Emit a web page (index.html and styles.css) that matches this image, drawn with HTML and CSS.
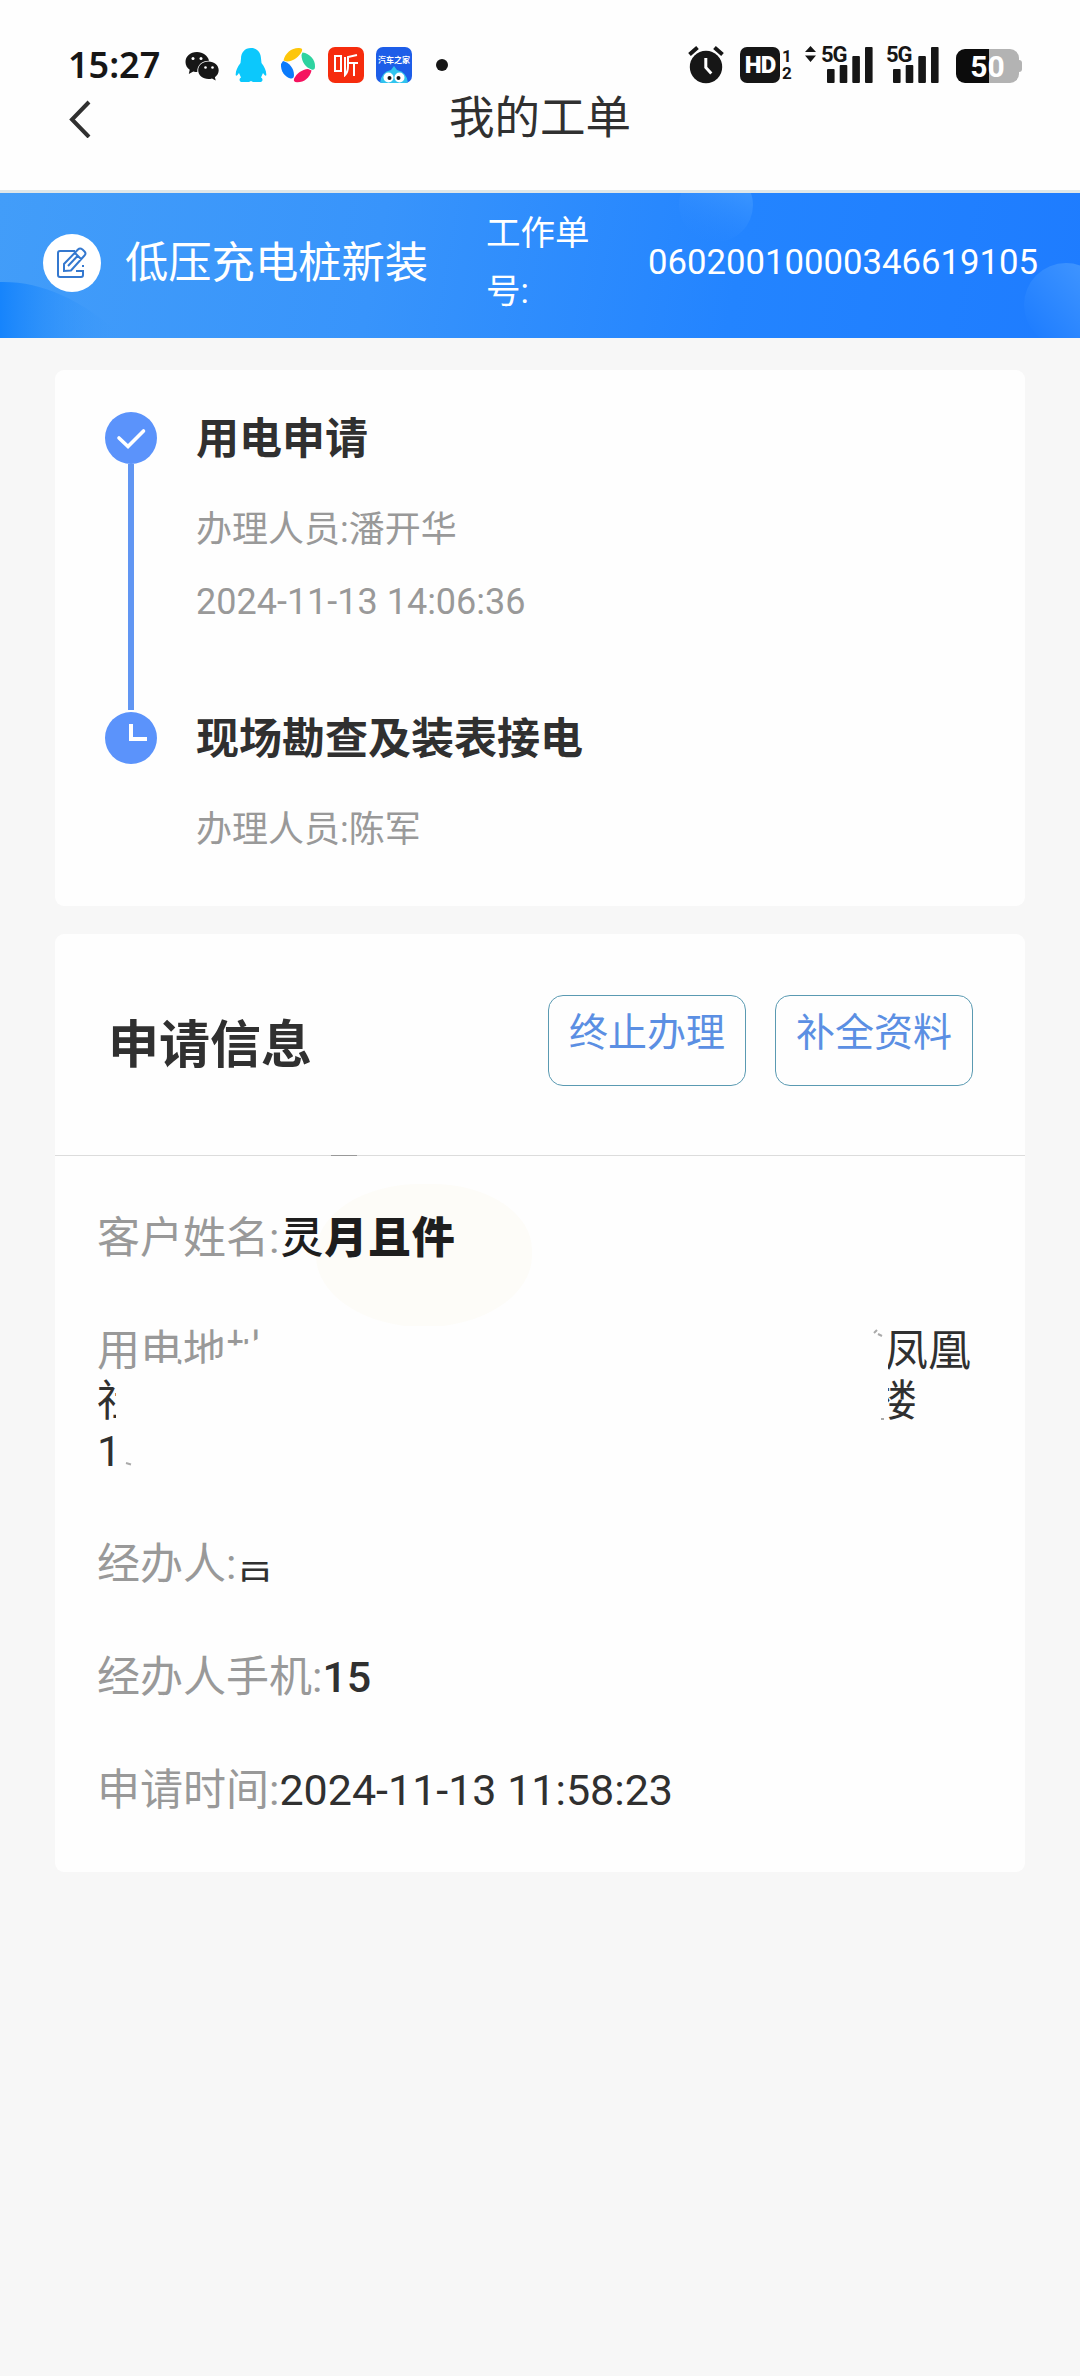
FILE: index.html
```html
<!DOCTYPE html>
<html lang="zh-CN">
<head>
<meta charset="utf-8">
<title>我的工单</title>
<link rel="stylesheet" href="styles.css">
</head>
<body>
<div class="status">
  <span class="clock">15:27</span>
  <svg class="ic-wechat" width="36" height="36" viewBox="0 0 36 36"><path fill="#161616" d="M13 5C6 5 1.500 9.500 1.500 15c0 3.300 1.600 5.900 4.200 7.700L4.800 27l4.500-2.500c1.300.4 2.500.5 4 .5C13 18 18 13.600 25 13.700 23.800 8.600 19 5 13 5z"/><path fill="#161616" d="M24.500 14.500c-5.900 0-10.300 3.900-10.300 8.800s4.400 8.700 10.300 8.700c1.200 0 2.400-.1 3.500-.5l3.700 2-.8-3.300c2.300-1.600 3.800-4 3.800-6.900 0-4.900-4.500-8.800-10.200-8.800z"/><g fill="#fff"><circle cx="9" cy="11.500" r="1.500"/><circle cx="17" cy="11.500" r="1.500"/><circle cx="21.500" cy="20.500" r="1.300"/><circle cx="28.500" cy="20.500" r="1.300"/></g></svg>
  <svg class="ic-qq" width="32" height="36" viewBox="0 0 32 36"><path fill="#0cc8fc" d="M16 1C9.500 1 6 6 6 11.500L5.500 16C2.500 20 .500 24 .700 28c.3 1.600 1.800.3 3.300-2l2 4.500c-2 .8-2 4.300.5 4.500h7.500l2-1 2 1H26c2-.5 2-3.700 0-4.500l2-4.500c1.500 2.300 3 3.600 3.300 2 .2-4-1.800-8-4.800-12L26 11.500C26 6 22.500 1 16 1z"/></svg>
  <svg class="ic-pinwheel" width="36" height="36" viewBox="0 0 36 36"><path fill="#fdc60a" d="M3.500 13.500C5 6 12 .6 19 1q4 0 3 3c-3 6-8 10-15 10.500z"/><path fill="#2ed3a0" d="M22.500 5.500C30 6.500 35.500 13 35 19.500q0 4-3.500 3C26 20.500 21.500 15 21.500 8z"/><path fill="#f5135f" d="M31.500 23.500C30 30.500 24 35.500 17 35.300q-4-.3-3-3.500C16.500 26.500 22 22.500 28 22z"/><path fill="#0b7bfb" d="M3 14C9 15.500 14 21 14 28q0 4-3.500 3.500C4.500 30 .5 24 1 17z"/></svg>
  <span class="app app-ting"><svg width="26" height="24" viewBox="0 0 26 24" fill="none" stroke="#fff" stroke-width="2"><path d="M2 3h6v15H2zM24 2l-9 2v9q0 6-3 9V4M15 10h10M21 10v13"/></svg></span>
  <span class="app app-car"><b>汽车之家</b><svg width="36" height="17" viewBox="0 0 36 17"><path fill="#30c4ee" d="M4 17Q5 6 15 4L18 0l3 4q10 2 11 13z"/><circle cx="12.500" cy="11.500" r="5" fill="#fff"/><circle cx="23.500" cy="11.500" r="5" fill="#fff"/><circle cx="13.500" cy="12" r="2" fill="#161616"/><circle cx="22.500" cy="12" r="2" fill="#161616"/></svg></span>
  <span class="more"></span>
  <span class="grow"></span>
  <svg class="ic-alarm" width="36" height="38" viewBox="0 0 36 38"><circle cx="18" cy="21" r="16.200" fill="#161616"/><path d="M1.500 8.500l8-7M34.500 8.500l-8-7" stroke="#161616" stroke-width="4"/><path d="M17.800 12v9.500l5.500 6" stroke="#fff" stroke-width="3" fill="none"/></svg>
  <span class="hd">HD</span>
  <span class="sim"><i>1</i><i>2</i></span>
  <span class="signal signal-a">
    <svg width="68" height="38" viewBox="0 0 68 38" fill="#161616"><path d="M5.500 0l5.500 6H0zM0 9.500h11l-5.500 6.500z"/><rect x="22" y="23" width="7.600" height="14" rx="1"/><rect x="34.700" y="19" width="7.600" height="18" rx="1"/><rect x="47.300" y="10" width="7.600" height="27" rx="1"/><rect x="60" y="1" width="7.600" height="36" rx="1"/></svg>
    <b>5G</b>
  </span>
  <span class="signal signal-b">
    <svg width="52" height="38" viewBox="0 0 52 38" fill="#161616"><rect x="6" y="23" width="7.600" height="14" rx="1"/><rect x="18.700" y="19" width="7.600" height="18" rx="1"/><rect x="31.300" y="10" width="7.600" height="27" rx="1"/><rect x="44" y="1" width="7.600" height="36" rx="1"/></svg>
    <b>5G</b>
  </span>
  <span class="battery"><b>50</b></span>
</div>
<header class="nav">
  <svg class="back" width="24" height="38" viewBox="0 0 24 38"><path d="M21 2L4 19.500 21 37" fill="none" stroke="#303030" stroke-width="4"/></svg>
  <h1>我的工单</h1>
</header>
<section class="banner">
  <svg class="banner-bg" width="1080" height="145" viewBox="0 0 1080 145">
    <defs>
      <linearGradient id="l" x1="0" x2="1"><stop offset="0" stop-color="#1684fc"/><stop offset="1" stop-color="#3f9bf9" stop-opacity="0"/></linearGradient>
      <linearGradient id="t" x1=".7" y1="0" x2=".3" y2="1"><stop offset="0" stop-color="#459dff"/><stop offset="1" stop-color="#2b88ff" stop-opacity="0"/></linearGradient>
      <linearGradient id="r" x1="1" y1=".3" x2=".2" y2="1"><stop offset="0" stop-color="#4095ff"/><stop offset="1" stop-color="#1e7dff"/></linearGradient>
    </defs>
    <path fill="url(#l)" d="M0 89C40 88 80 105 125 145H0z"/>
    <circle cx="716" cy="12" r="37" fill="url(#t)"/>
    <circle cx="1066" cy="112" r="42" fill="url(#r)"/>
  </svg>
  <span class="badge"><svg width="32" height="32" viewBox="0 0 32 32" fill="none" stroke="#3478cf" stroke-width="2"><path d="M19 4H4a2 2 0 0 0-2 2v22a2 2 0 0 0 2 2h21q2 0 2-2v-4h-7M27 20v-2"/><path d="M8 24v-7L22 2.500q2-2 4.500 0l2 2q2 2 0 4L15 23.500zM19 6l6.500 6.500M12 19l9.500-10"/></svg></span>
  <span class="kind">低压充电桩新装</span>
  <span class="no-label">工作单号:</span>
  <span class="no">06020010000346619105</span>
</section>
<main>
  <section class="card steps">
    <div class="step">
      <div class="rail"><svg width="52" height="52" viewBox="0 0 52 52"><circle cx="26" cy="26" r="26" fill="#5b93fb"/><path d="M14 26l9 8.500L38.500 19" fill="none" stroke="#fff" stroke-width="3.600" stroke-linecap="round"/></svg><span class="line"></span></div>
      <div class="info"><h2>用电申请</h2><p>办理人员:潘开华</p><p>2024-11-13 14:06:36</p></div>
    </div>
    <div class="step">
      <div class="rail"><svg width="52" height="52" viewBox="0 0 52 52"><circle cx="26" cy="26" r="26" fill="#5b93fb"/><path d="M26 12v15h16" fill="none" stroke="#fff" stroke-width="4"/></svg></div>
      <div class="info"><h2>现场勘查及装表接电</h2><p>办理人员:陈军</p></div>
    </div>
  </section>
  <section class="card apply">
    <div class="head"><h3>申请信息</h3><button>终止办理</button><button>补全资料</button></div>
    <div class="fields">
      <div class="smudge"></div>
      <div class="field">客户姓名:<span class="name"><i>灵</i>月且件</span></div>
      <div class="field address">
        <div class="row"><span>用电地址</span><em>凤凰</em></div>
        <div class="row"><em>社</em><em class="lou">楼</em></div>
        <div class="row"><em>1</em></div>
        <svg class="erase" width="800" height="160" viewBox="0 0 800 160"><path fill="#fefefe" d="M28 46Q40 40 50 37L80 37 90 41 110 37 128 29 134 20 150 18 172 8 176 0H791V130H32V92H19V56L28 46z"/><path d="M777 7l3-3M781 8l4 2M784 93h3M29 137l5 1.500" stroke="#aaa" stroke-width="2"/></svg>
      </div>
      <div class="field">经办人:<em class="agent">言</em></div>
      <div class="field">经办人手机:<em class="phone">15</em></div>
      <div class="field">申请时间:<em>2024-11-13 11:58:23</em></div>
    </div>
  </section>
</main>
</body>
</html>
```
FILE: styles.css
```css
* { box-sizing: border-box; }
body {
  margin: 0;
  width: 1080px;
  min-height: 2376px;
  background: #f7f7f7;
  font-family: Roboto, "Noto Sans CJK SC", sans-serif;
  color: #303030;
}
h1, h2, h3, p { margin: 0; }
i, em { font-style: normal; }
svg { display: block; flex: none; }

.status {
  display: flex;
  align-items: center;
  height: 90px;
  padding: 40px 57px 0 68px;
  background: #fefefe;
  color: #161616;
}
.clock {
  width: 116px;
  font: 600 36px/50px "Noto Sans", sans-serif;
  white-space: nowrap;
}
.ic-qq { margin-left: 15px; }
.ic-pinwheel { margin-left: 13px; }
.app {
  flex: none;
  display: flex;
  flex-direction: column;
  align-items: center;
  width: 36px;
  height: 36px;
  border-radius: 7px;
  overflow: hidden;
}
.app-ting { margin-left: 12px; padding-top: 6px; background: #f62c0d; }
.app-car { margin-left: 12px; background: #1d5de8; color: #fff; }
.app-car b { font-size: 8px; line-height: 12px; padding-top: 8px; height: 19px; white-space: nowrap; }
.more { width: 12px; height: 12px; margin-left: 24px; border-radius: 50%; background: #161616; }
.grow { flex: 1; }
.hd {
  width: 40px;
  height: 36px;
  margin-left: 16px;
  border-radius: 7px;
  background: #161616;
  color: #fff;
  font: 900 24px/37px Roboto, sans-serif;
  letter-spacing: -1px;
  text-align: center;
}
.sim { display: flex; flex-direction: column; width: 10px; margin-left: 2px; font: 700 17px/17px Roboto, sans-serif; }
.signal { position: relative; }
.signal-a { margin-left: 13px; }
.signal-b { margin-left: 14px; }
.signal b { position: absolute; top: -2px; font: 700 22px/21px Roboto, sans-serif; letter-spacing: -1px; }
.signal-a b { left: 16px; }
.signal-b b { left: -1px; }
.battery {
  position: relative;
  width: 63px;
  height: 34px;
  margin: 2px 4px 0 17px;
  border-radius: 9px;
  background: linear-gradient(90deg, #0c0c0c 33px, #b3b3b3 33px);
  color: #fff;
  text-align: center;
}
.battery::after {
  content: "";
  position: absolute;
  right: -3px;
  top: 11px;
  width: 3px;
  height: 12px;
  border-radius: 0 3px 3px 0;
  background: #b3b3b3;
}
.battery b { font: 700 30px/35px Roboto, sans-serif; }

.nav {
  display: flex;
  align-items: center;
  height: 103px;
  padding: 0 68px 43px;
  background: #fefefe;
  border-bottom: 3px solid #dfe7e9;
}
.nav h1 { flex: 1; padding: 1px 24px 0 0; text-align: center; font-size: 45.500px; line-height: 56px; font-weight: 400; }

.banner {
  position: relative;
  display: flex;
  align-items: center;
  height: 145px;
  padding: 0 0 5px 43px;
  background: linear-gradient(100deg, #429df9 0, #3894fb 35%, #2384ff 68%, #1e7cff 100%);
  color: #fff;
}
.banner > span { position: relative; }
.banner-bg { position: absolute; left: 0; top: 0; }
.badge { display: flex; align-items: center; justify-content: center; width: 58px; height: 58px; border-radius: 50%; background: #fff; }
.badge svg { margin-top: -1px; }
.kind { width: 361px; margin-left: 24px; font-size: 43.300px; line-height: 60px; padding-top: 2px; }
.no-label { width: 120px; font-size: 34.500px; line-height: 58px; padding-bottom: 2px; }
.no { margin-left: 42px; font-size: 34.700px; line-height: 40px; padding-bottom: 2px; }

main { display: flex; flex-direction: column; gap: 28px; padding: 32px 55px 0; }
.card { background: #fefefe; border-radius: 9px; }

.steps { height: 536px; padding: 42px 50px 0; }
.step { display: flex; gap: 39px; height: 300px; }
.rail { display: flex; flex-direction: column; align-items: center; width: 52px; }
.line { width: 6px; height: 246px; background: #6196f3; }
.info h2 { font-size: 43px; line-height: 54px; font-weight: 700; }
.info p { font-size: 36px; line-height: 72px; color: #999; }
.info h2 + p { margin-top: 28px; }

.apply { height: 938px; }
.head { display: flex; align-items: flex-start; height: 222px; padding: 61px 52px 0 53px; border-bottom: 1px solid #dcdcdc; }
.head h3 { flex: 1; padding-top: 16px; font-size: 51px; line-height: 70px; }
.head button {
  width: 198px;
  height: 91px;
  margin-left: 29px;
  padding: 0 0 23px;
  border: 1px solid #5a9ab2;
  border-radius: 15px;
  background: none;
  color: #5b8fe3;
  font: 400 39px/66px "Noto Sans CJK SC", sans-serif;
}
.fields { position: relative; display: flex; flex-direction: column; gap: 63px; padding: 57px 42px 0; }
.fields::before { content: ""; position: absolute; left: 276px; top: -1px; width: 26px; height: 1px; background: #999; }
.field { position: relative; font-size: 43px; line-height: 50px; color: #999; }
.field em { color: #303030; }
.name { position: relative; margin-left: 1px; font-weight: 900; font-size: 43px; letter-spacing: .8px; color: #1e1e1e; }
.name i { font-weight: 500; }
.smudge { position: absolute; left: 261px; top: 28px; width: 216px; height: 143px; border-radius: 48% 46% 50% 50%; background: #fdfcf8; }
.row { display: flex; justify-content: space-between; height: 50px; padding-right: 12px; }
.lou { padding-right: 54px; }
.erase { position: absolute; left: 0; top: 0; }
.agent { display: inline-block; margin-left: -2px; font-size: 41px; clip-path: inset(19px 0 0 0); vertical-align: top; }
.phone { font-weight: 500; }
```
